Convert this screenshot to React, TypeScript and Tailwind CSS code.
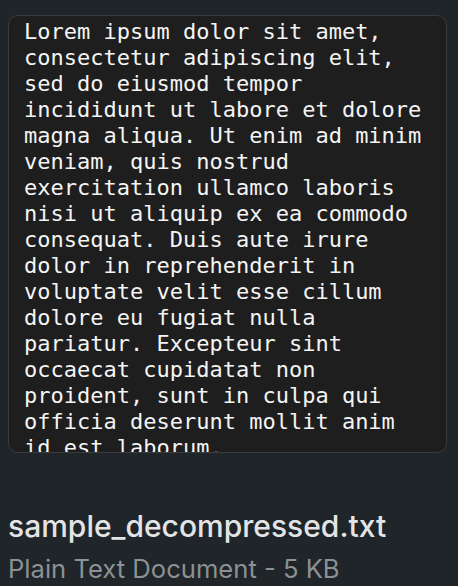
const lines = [
  'Lorem ipsum dolor sit amet,',
  'consectetur adipiscing elit,',
  'sed do eiusmod tempor',
  'incididunt ut labore et dolore',
  'magna aliqua. Ut enim ad minim',
  'veniam, quis nostrud',
  'exercitation ullamco laboris',
  'nisi ut aliquip ex ea commodo',
  'consequat. Duis aute irure',
  'dolor in reprehenderit in',
  'voluptate velit esse cillum',
  'dolore eu fugiat nulla',
  'pariatur. Excepteur sint',
  'occaecat cupidatat non',
  'proident, sunt in culpa qui',
  'officia deserunt mollit anim',
  'id est laborum.',
]

export default function App() {
  return (
    <div className="flex h-[586px] w-[458px] flex-col bg-[#1f2528] px-2 pt-[15px]">
      <div className="h-[438px] w-[439px] overflow-hidden rounded-[10px] border border-[#3a3b3c] bg-[#1e1e1e] px-[15px] pt-[3px]">
        <pre className="whitespace-pre font-['DejaVu_Sans_Mono',monospace] text-[22px] leading-[26px] text-[#f4f4f4]">
          {lines.join('\n')}
        </pre>
      </div>
      <div className="mt-[55px] font-['Inter',sans-serif] text-[30px] font-medium leading-[36px] text-[#e3e4e5]">
        sample_decompressed.txt
      </div>
      <div className="mt-[10px] font-['Inter',sans-serif] text-[25.6px] leading-[30px] text-[#8b9194]">
        Plain Text Document - 5 KB
      </div>
    </div>
  )
}
